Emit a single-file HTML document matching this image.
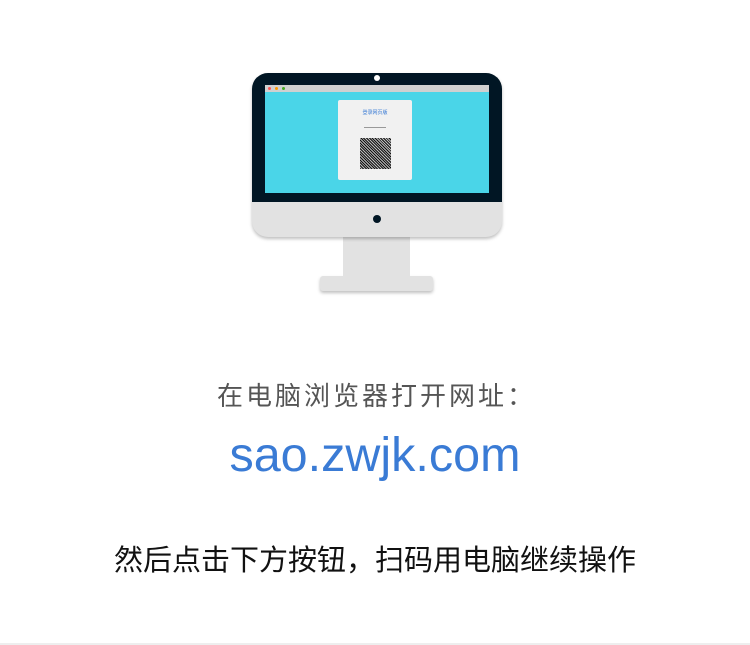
<!DOCTYPE html>
<html><head><meta charset="utf-8"><style>
body{margin:0;width:750px;height:645px;background:#fff;position:relative;overflow:hidden;font-family:"Liberation Sans","Noto Sans CJK SC",sans-serif}
.a{position:absolute}
.t{position:absolute;left:0;width:750px;text-align:center;white-space:nowrap}
</style></head><body>
<div class="a" style="left:320px;top:276px;width:113px;height:15px;background:#e2e2e2;border-radius:3px;box-shadow:0 2px 3px rgba(0,0,0,.25)"></div>
<div class="a" style="left:343px;top:234px;width:67px;height:43px;background:#e2e2e2"></div>
<div class="a" style="left:252px;top:73px;width:250px;height:164px;background:#e2e2e2;border-radius:16px;overflow:hidden;box-shadow:0 2px 3px rgba(0,0,0,.25)">
 <div class="a" style="left:0;top:0;width:250px;height:129px;background:#011624"></div>
</div>
<div class="a" style="left:374px;top:75px;width:6px;height:6px;border-radius:50%;background:#fff"></div>
<div class="a" style="left:373px;top:215px;width:8px;height:8px;border-radius:50%;background:#011624"></div>
<div class="a" style="left:265px;top:85px;width:224px;height:108px;background:#4ad5e8">
 <div class="a" style="left:0;top:0;width:224px;height:7px;background:#d0d0d0"></div>
 <div class="a" style="left:3px;top:2px;width:3px;height:3px;border-radius:50%;background:#f55"></div>
 <div class="a" style="left:10px;top:2px;width:3px;height:3px;border-radius:50%;background:#f90"></div>
 <div class="a" style="left:17px;top:2px;width:3px;height:3px;border-radius:50%;background:#4a2"></div>
 <div class="a" style="left:73px;top:15px;width:74px;height:80px;background:#f1f1f1;border-radius:2px">
  <div class="a" style="left:0;top:9px;width:74px;text-align:center;font-size:5px;color:#3a7bd5">登录网页版</div>
  <div class="a" style="left:26px;top:27px;width:22px;height:1px;background:#999"></div>
  <div class="a" style="left:22px;top:38px;width:31px;height:31px;background:repeating-linear-gradient(45deg,#111 0 1px,#bbb 1px 2px),#222"></div>
 </div>
</div>
<div class="t" style="top:376px;font-size:26px;letter-spacing:3px;text-indent:3px;color:#555">在电脑浏览器打开网址：</div>
<div class="t" style="top:427px;font-size:48.5px;color:#3a7bd5">sao.zwjk.com</div>
<div class="t" style="top:537px;font-size:29px;color:#111">然后点击下方按钮，扫码用电脑继续操作</div>
<div class="a" style="left:0;top:643px;width:750px;height:2px;background:#eee"></div>
</body></html>
